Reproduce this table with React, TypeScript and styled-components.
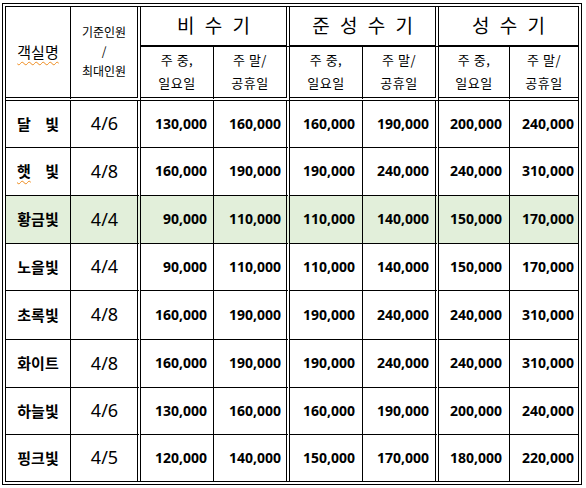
import React from "react";
import styled, { createGlobalStyle } from "styled-components";

const Global = createGlobalStyle`
  html, body { margin: 0; padding: 0; background: #ffffff; }
  body { font-family: "Noto Sans CJK KR", "Noto Sans", sans-serif; color: #000; }
`;

const Page = styled.div`
  padding: 3px 0 0 2px;
`;

const Frame = styled.div`
  width: 572px;
  border: 4px double #000;
`;

const Table = styled.table`
  width: 572px;
  table-layout: fixed;
  border-collapse: separate;
  border-spacing: 0;
`;

type Edge = "none" | "single" | "double" | "thick";
const edge = (e: Edge) =>
  e === "none" ? "none" : e === "double" ? "4px double #000" : e === "thick" ? "2px solid #000" : "1px solid #000";

const Cell = styled.td<{ $r: Edge; $b: Edge }>`
  padding: 0 0 2px 0;
  box-sizing: border-box;
  border-right: ${(p) => edge(p.$r)};
  border-bottom: ${(p) => edge(p.$b)};
  vertical-align: middle;
`;

const HeadCell = styled(Cell).attrs({ as: "th" })`
  font-weight: 400;
  text-align: center;
  font-family: "Noto Sans CJK KR", sans-serif;
`;

const RoomHead = styled(HeadCell)`
  font-size: 15px;
  padding-top: 1px;
`;

const CapHead = styled(HeadCell)`
  font-size: 12px;
  line-height: 19.5px;
`;

const GroupHead = styled(HeadCell)`
  font-size: 19px;
  letter-spacing: 3px;
  padding-left: 3px;
  padding-bottom: 3px;
`;

const SubHead = styled(HeadCell)`
  font-size: 13px;
  line-height: 23px;
  letter-spacing: 0.5px;
`;

const Misspelled = styled.span`
  text-decoration: underline wavy #ee8a1c 1px;
  text-underline-offset: 3px;
`;

const Row = styled.tr<{ $hl?: boolean }>`
  background: ${(p) => (p.$hl ? "#e2efda" : "#ffffff")};
`;

const NameCell = styled(Cell)`
  font-family: "Noto Sans CJK KR", sans-serif;
  font-weight: 700;
  font-size: 15px;
  text-align: center;
  word-spacing: 11px;
`;

const CapCell = styled(Cell)`
  font-family: "Noto Sans", "Noto Sans CJK KR", sans-serif;
  font-size: 18px;
  text-align: center;
  padding-left: 1px;
`;

const PriceCell = styled(Cell)<{ $pr: number }>`
  font-family: "Noto Sans", "Noto Sans CJK KR", sans-serif;
  font-weight: 700;
  font-size: 14px;
  text-align: right;
  padding-right: ${(p) => p.$pr}px;
`;

type Room = {
  name: React.ReactNode;
  cap: string;
  prices: string[];
  h: number;
  hl?: boolean;
};

const rooms: Room[] = [
  { name: "달 빛", cap: "4/6", prices: ["130,000", "160,000", "160,000", "190,000", "200,000", "240,000"], h: 47 },
  { name: <><Misspelled>햇</Misspelled> 빛</>, cap: "4/8", prices: ["160,000", "190,000", "190,000", "240,000", "240,000", "310,000"], h: 48 },
  { name: "황금빛", cap: "4/4", prices: ["90,000", "110,000", "110,000", "140,000", "150,000", "170,000"], h: 48, hl: true },
  { name: "노을빛", cap: "4/4", prices: ["90,000", "110,000", "110,000", "140,000", "150,000", "170,000"], h: 47 },
  { name: "초록빛", cap: "4/8", prices: ["160,000", "190,000", "190,000", "240,000", "240,000", "310,000"], h: 49 },
  { name: "화이트", cap: "4/8", prices: ["160,000", "190,000", "190,000", "240,000", "240,000", "310,000"], h: 48 },
  { name: "하늘빛", cap: "4/6", prices: ["130,000", "160,000", "160,000", "190,000", "200,000", "240,000"], h: 47 },
  { name: "핑크빛", cap: "4/5", prices: ["120,000", "140,000", "150,000", "170,000", "180,000", "220,000"], h: 46 },
];

const priceEdges: Edge[] = ["single", "double", "single", "double", "single", "none"];
const pricePads = [6, 5, 7, 6, 7, 4];
const widths = [65, 70, 73, 76, 73, 76, 71, 68];

export default function App() {
  return (
    <>
      <Global />
      <Page>
        <Frame>
          <Table>
            <colgroup>
              {widths.map((w, i) => (
                <col key={i} style={{ width: w }} />
              ))}
            </colgroup>
            <thead>
              <tr style={{ height: 40 }}>
                <RoomHead rowSpan={2} $r="single" $b="double">
                  <Misspelled>객실명</Misspelled>
                </RoomHead>
                <CapHead rowSpan={2} $r="double" $b="double">
                  기준인원
                  <br />/<br />
                  최대인원
                </CapHead>
                <GroupHead colSpan={2} $r="double" $b="thick">비 수 기</GroupHead>
                <GroupHead colSpan={2} $r="double" $b="thick">준 성 수 기</GroupHead>
                <GroupHead colSpan={2} $r="none" $b="thick">성 수 기</GroupHead>
              </tr>
              <tr style={{ height: 54 }}>
                {priceEdges.map((e, i) => (
                  <SubHead key={i} $r={e} $b="double">
                    {i % 2 === 0 ? (
                      <>주 중,<br />일요일</>
                    ) : (
                      <>주 말/<br />공휴일</>
                    )}
                  </SubHead>
                ))}
              </tr>
            </thead>
            <tbody>
              {rooms.map((r, ri) => {
                const b: Edge = ri === rooms.length - 1 ? "none" : "single";
                return (
                  <Row key={ri} $hl={r.hl} style={{ height: r.h }}>
                    <NameCell $r="single" $b={b}>{r.name}</NameCell>
                    <CapCell $r="double" $b={b}>{r.cap}</CapCell>
                    {r.prices.map((p, pi) => (
                      <PriceCell key={pi} $r={priceEdges[pi]} $b={b} $pr={pricePads[pi]}>
                        {p}
                      </PriceCell>
                    ))}
                  </Row>
                );
              })}
            </tbody>
          </Table>
        </Frame>
      </Page>
    </>
  );
}
